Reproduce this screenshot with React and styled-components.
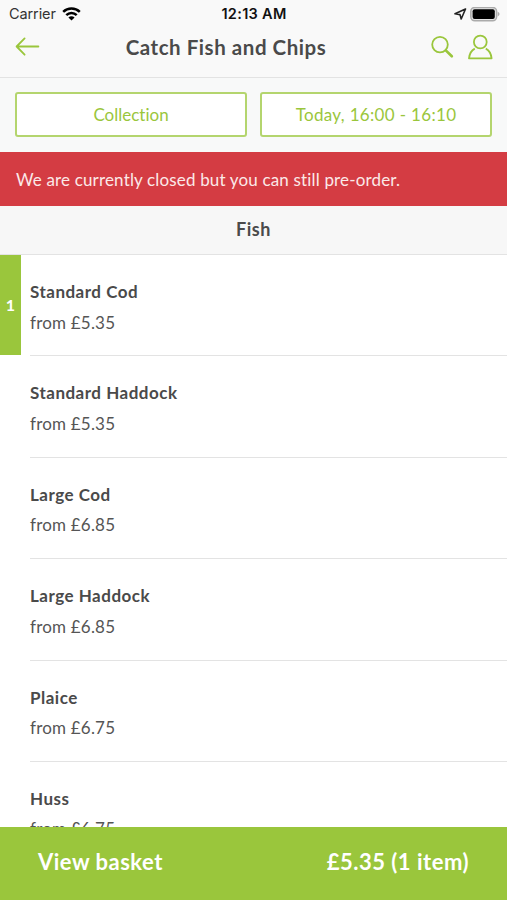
import React from 'react'
import styled, { createGlobalStyle } from 'styled-components'

const green = '#9ac63c'
const red = '#d43c43'
const dark = '#4a4a4a'
const line = '#e3e3e3'

const GlobalStyle = createGlobalStyle`
  * {
    box-sizing: border-box;
  }
  body {
    margin: 0;
    background: #fff;
    color: ${dark};
    font-family: Lato, 'Noto Sans', sans-serif;
    overflow: hidden;
  }
`
const Screen = styled.div`
  width: 507px;
  height: 900px;
  display: flex;
  flex-direction: column;
  overflow: hidden;
`
const StatusBar = styled.div`
  height: 28px;
  flex: none;
  display: grid;
  grid-template-columns: 1fr auto 1fr;
  align-items: center;
  padding: 0 7px 0 9px;
  background: #f9f9f9;
  color: #111;
  font: 14.5px/28px Inter, sans-serif;
`
const Carrier = styled.div`
  display: flex;
  align-items: center;
  gap: 6px;
  color: #333;
  letter-spacing: -0.1px;
`
const Clock = styled.div`
  font-size: 14.5px;
  font-weight: 600;
  letter-spacing: 0.3px;
  margin-left: -1px;
`
const Indicators = styled.div`
  display: flex;
  align-items: center;
  justify-content: flex-end;
  gap: 3px;
`
const NavBar = styled.header`
  height: 50px;
  flex: none;
  display: grid;
  grid-template-columns: auto 1fr auto;
  align-items: center;
  padding: 0 14px 11px 15px;
  background: #f9f9f9;
  border-bottom: 1px solid ${line};
`
const Title = styled.h1`
  margin: 0;
  padding: 0 19px 0 0;
  font-size: 20.5px;
  line-height: 26px;
  font-weight: 700;
  letter-spacing: 0.55px;
  text-align: center;
`
const Actions = styled.div`
  display: flex;
  justify-content: flex-end;
  gap: 14px;
`
const Options = styled.div`
  height: 74px;
  flex: none;
  display: flex;
  gap: 13px;
  padding: 14px 15px 15px;
  background: #f8f9f9;
`
const Option = styled.button`
  flex: 1;
  padding: 0;
  background: #fff;
  border: 2px solid #b4d56e;
  border-radius: 3px;
  color: ${green};
  font: 17px/20px Lato, sans-serif;
  letter-spacing: ${p => p.$spacing}px;
  font-variant-ligatures: none;
`
const Notice = styled.div`
  height: 54px;
  flex: none;
  padding-left: 16px;
  background: ${red};
  color: #fbe9e8;
  font-size: 17px;
  line-height: 55px;
  letter-spacing: 0.16px;
`
const SectionTitle = styled.h2`
  height: 49px;
  flex: none;
  margin: 0;
  background: #f7f7f7;
  border-bottom: 1px solid ${line};
  font-size: 18px;
  line-height: 47px;
  font-weight: 700;
  letter-spacing: 0.5px;
  text-align: center;
`
const List = styled.ul`
  flex: 1;
  min-height: 0;
  margin: 0;
  padding: 0;
  list-style: none;
  overflow: hidden;
`
const Item = styled.li`
  height: 101.4px;
  display: flex;
`
const Count = styled.div`
  width: 20.6px;
  height: 100px;
  flex: none;
  background: ${p => (p.$active ? green : 'transparent')};
  color: #fff;
  font-size: 16px;
  line-height: 100px;
  font-weight: 700;
  text-align: center;
`
const Details = styled.div`
  flex: 1;
  margin-left: 9.4px;
  padding-top: 22px;
  border-bottom: 1px solid ${line};
`
const Name = styled.div`
  font-size: 17px;
  line-height: 30.5px;
  font-weight: 700;
  letter-spacing: 0.5px;
`
const Price = styled.div`
  color: #555;
  font-size: 17px;
  line-height: 30.5px;
  letter-spacing: 0.2px;
`
const Basket = styled.footer`
  height: 73px;
  flex: none;
  display: flex;
  justify-content: space-between;
  padding: 0 38px;
  background: ${green};
  color: #fff;
  font-size: 22px;
  line-height: 70px;
  font-weight: 700;
  letter-spacing: 0.5px;
`

const WifiIcon = () => (
  <svg width="19" height="15" viewBox="0 0 19 15" fill="none" stroke="#000" strokeWidth="2.5">
    <path d="M1.2 4.9C5.8 .4 13.2 .4 17.8 4.9" />
    <path d="M4.3 8.2C7.2 5.3 11.8 5.3 14.7 8.2" />
    <path d="M9.5 13.5L6.4 10.4C8.2 8.8 10.8 8.8 12.6 10.4Z" fill="#000" stroke="none" />
  </svg>
)
const LocationIcon = () => (
  <svg width="13" height="12" viewBox="0 0 13 12" fill="none" stroke="#222" strokeWidth="1.6" strokeLinejoin="round">
    <path d="M11.5 1L1 5.8L6 6.6L7.2 11Z" />
  </svg>
)
const BatteryIcon = () => (
  <svg width="30" height="15" viewBox="0 0 30 15">
    <rect x=".8" y=".4" width="25.8" height="13.4" rx="4" fill="#e4e4e4" stroke="#ababab" strokeWidth="1.5" />
    <rect x="2.6" y="2.2" width="22.2" height="9.8" rx="2" fill="#000" />
    <path d="M27.7 4.8Q29.6 5.6 29.6 7.1T27.7 9.4Z" fill="#ababab" />
  </svg>
)
const BackIcon = () => (
  <svg width="25" height="20" viewBox="0 0 25 20" fill="none" stroke={green} strokeWidth="1.8" strokeLinecap="round" strokeLinejoin="round">
    <path d="M23.4 9.5H1.6M9.6 1.4L1.6 9.5L9.6 17.7" />
  </svg>
)
const SearchIcon = () => (
  <svg width="23" height="26" viewBox="0 0 23 26" fill="none" stroke={green}>
    <circle cx="9" cy="10.6" r="7.8" strokeWidth="1.8" />
    <path d="M14.8 16.4L20.8 22.2" strokeWidth="2.7" strokeLinecap="round" />
  </svg>
)
const ProfileIcon = () => (
  <svg width="25" height="26" viewBox="0 0 25 26" fill="none" stroke={green} strokeWidth="1.8" strokeLinejoin="round">
    <circle cx="12.3" cy="8" r="6.4" />
    <path d="M6.8 14.6C3.4 16.4 1.5 19.7 1 24.3H23.6C23.1 19.7 21.2 16.4 17.8 14.6" />
  </svg>
)

const items = [
  { name: 'Standard Cod', price: '£5.35', count: 1 },
  { name: 'Standard Haddock', price: '£5.35' },
  { name: 'Large Cod', price: '£6.85' },
  { name: 'Large Haddock', price: '£6.85' },
  { name: 'Plaice', price: '£6.75' },
  { name: 'Huss', price: '£6.75' }
]

const App = () => (
  <Screen>
    <GlobalStyle />
    <StatusBar>
      <Carrier>
        Carrier
        <WifiIcon />
      </Carrier>
      <Clock>12:13 AM</Clock>
      <Indicators>
        <LocationIcon />
        <BatteryIcon />
      </Indicators>
    </StatusBar>
    <NavBar>
      <BackIcon />
      <Title>Catch Fish and Chips</Title>
      <Actions>
        <SearchIcon />
        <ProfileIcon />
      </Actions>
    </NavBar>
    <Options>
      <Option $spacing={0}>Collection</Option>
      <Option $spacing={0.33}>Today, 16:00 - 16:10</Option>
    </Options>
    <Notice>We are currently closed but you can still pre-order.</Notice>
    <SectionTitle>Fish</SectionTitle>
    <List>
      {items.map(item => (
        <Item key={item.name}>
          <Count $active={!!item.count}>{item.count}</Count>
          <Details>
            <Name>{item.name}</Name>
            <Price>from {item.price}</Price>
          </Details>
        </Item>
      ))}
    </List>
    <Basket>
      <span>View basket</span>
      <span>£5.35 (1 item)</span>
    </Basket>
  </Screen>
)

export default App
